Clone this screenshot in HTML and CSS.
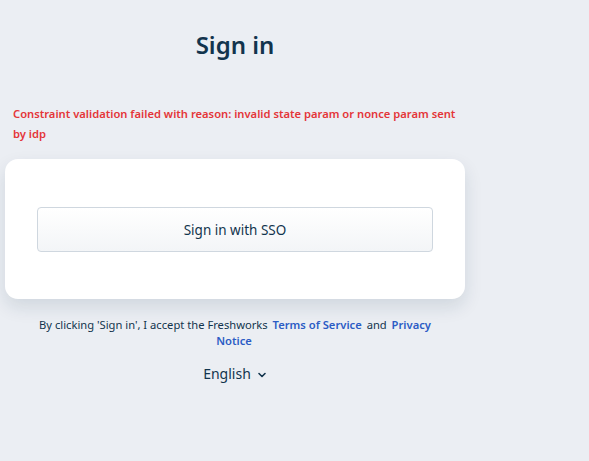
FILE: index.html
```html
<!DOCTYPE html>
<html lang="en">
<head>
<meta charset="utf-8">
<title>Sign in</title>
<link rel="stylesheet" href="styles.css">
</head>
<body>
<main class="page">
  <h1 class="title">Sign in</h1>
  <p class="error">Constraint validation failed with reason: invalid state param or nonce param sent by idp</p>
  <section class="card">
    <button class="sso-btn" type="button">Sign in with SSO</button>
  </section>
  <p class="terms">By clicking 'Sign in', I accept the Freshworks <a class="link" href="#">Terms of Service</a> and <a class="link link-split" href="#"><span class="word">Privacy</span> <span class="word">Notice</span></a></p>
  <div class="lang">
    <span>English</span>
    <svg class="chev" width="10" height="10" viewBox="0 0 10 10" aria-hidden="true"><path d="M2 3.5 L5 6.5 L8 3.5" fill="none" stroke="#12344d" stroke-width="1.6" stroke-linecap="round" stroke-linejoin="round"/></svg>
  </div>
</main>
</body>
</html>
```
FILE: styles.css
```css
* { box-sizing: border-box; }
html, body { margin: 0; padding: 0; }
body {
  background: #ebeef3;
  font-family: "Noto Sans", "Open Sans", sans-serif;
  color: #12344d;
  height: 461px;
}
.page {
  width: 460px;
  margin-left: 5px;
  display: flex;
  flex-direction: column;
}
.title {
  margin: 30px 0 0;
  text-align: center;
  font-size: 24px;
  line-height: 30px;
  font-weight: 600;
  color: #12344d;
}
.error {
  margin: 44px 0 0;
  padding: 0 2px 0 8px;
  font-size: 11.2px;
  line-height: 20px;
  font-weight: 600;
  color: #e43538;
}
.card {
  margin-top: 15px;
  background: #fff;
  border-radius: 13px;
  padding: 48px 32px 47px;
  box-shadow: 0 8px 18px rgba(18, 52, 77, 0.12);
}
.sso-btn {
  display: block;
  width: 100%;
  height: 45px;
  border: 1px solid #cfd7df;
  border-radius: 4px;
  background: linear-gradient(#ffffff, #f3f5f7);
  font-family: inherit;
  font-size: 13.5px;
  color: #12344d;
  cursor: pointer;
}
.terms {
  margin: 18px 0 0;
  padding: 0 26px;
  text-align: center;
  font-size: 11.2px;
  line-height: 16px;
  color: #12344d;
}
.link {
  color: #2c5cc5;
  font-weight: 600;
  text-decoration: none;
  margin: 0 2px;
}
.word { display: inline-block; }
.lang {
  margin-top: 15px;
  display: flex;
  justify-content: center;
  align-items: center;
  gap: 6px;
  font-size: 14px;
  line-height: 20px;
}
.chev { margin-top: 1px; }
```
